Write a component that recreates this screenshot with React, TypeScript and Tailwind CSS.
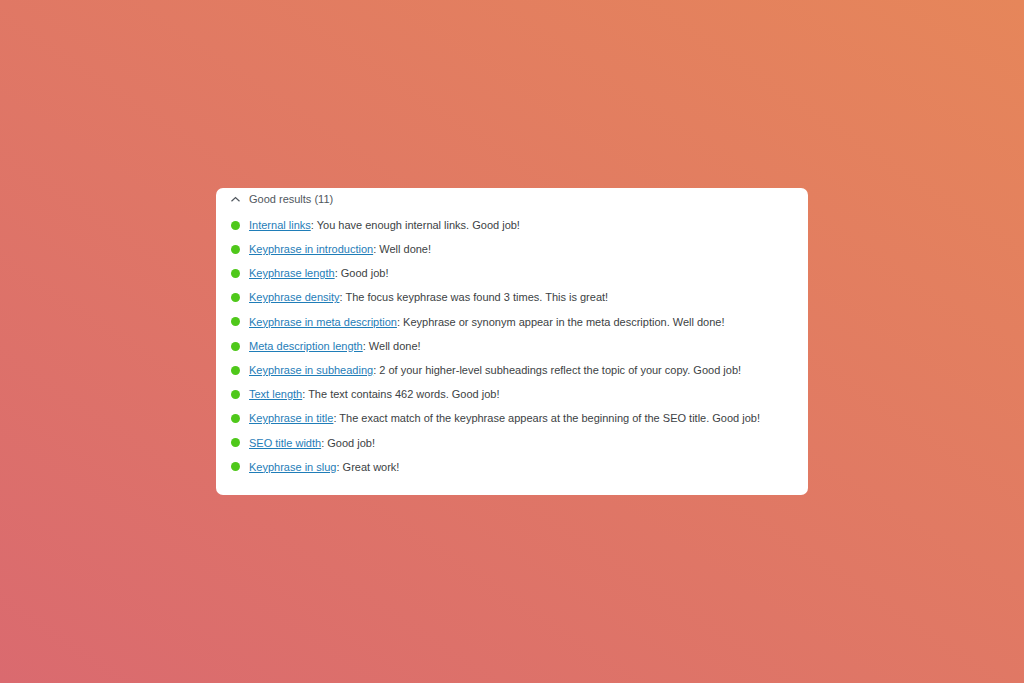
import React from "react";

const rows: [string, string][] = [
  ["Internal links", "You have enough internal links. Good job!"],
  ["Keyphrase in introduction", "Well done!"],
  ["Keyphrase length", "Good job!"],
  ["Keyphrase density", "The focus keyphrase was found 3 times. This is great!"],
  ["Keyphrase in meta description", "Keyphrase or synonym appear in the meta description. Well done!"],
  ["Meta description length", "Well done!"],
  ["Keyphrase in subheading", "2 of your higher-level subheadings reflect the topic of your copy. Good job!"],
  ["Text length", "The text contains 462 words. Good job!"],
  ["Keyphrase in title", "The exact match of the keyphrase appears at the beginning of the SEO title. Good job!"],
  ["SEO title width", "Good job!"],
  ["Keyphrase in slug", "Great work!"],
];

export default function App() {
  return (
    <div
      className="w-full h-[683px] flex items-center justify-center bg-[linear-gradient(to_top_right,#da6a6f,#e6865a)]"
      style={{ fontFamily: '"Liberation Sans", Arial, sans-serif' }}
    >
      <div className="w-[592px] bg-white rounded-[7px] pb-[16px]">
        <div className="h-[23px] flex items-center pl-[14px] gap-[8px] text-[11px] text-[#50575e]">
          <svg width="11" height="11" viewBox="0 0 11 11" className="shrink-0">
            <path d="M1.5 7.3 L5.5 3.5 L9.5 7.3" fill="none" stroke="#50575e" strokeWidth="1.2" />
          </svg>
          <span>Good results (11)</span>
        </div>
        <ul className="mt-[2px]">
          {rows.map(([link, text]) => (
            <li key={link} className="h-[24.2px] flex items-center pl-[15px] gap-[9px] text-[11px] text-[#3c3f44]">
              <span className="w-[9px] h-[9px] rounded-full bg-[#4fc81a] shrink-0" />
              <span>
                <a href="#" className="text-[#1f7db8] underline">{link}</a>: {text}
              </span>
            </li>
          ))}
        </ul>
      </div>
    </div>
  );
}
